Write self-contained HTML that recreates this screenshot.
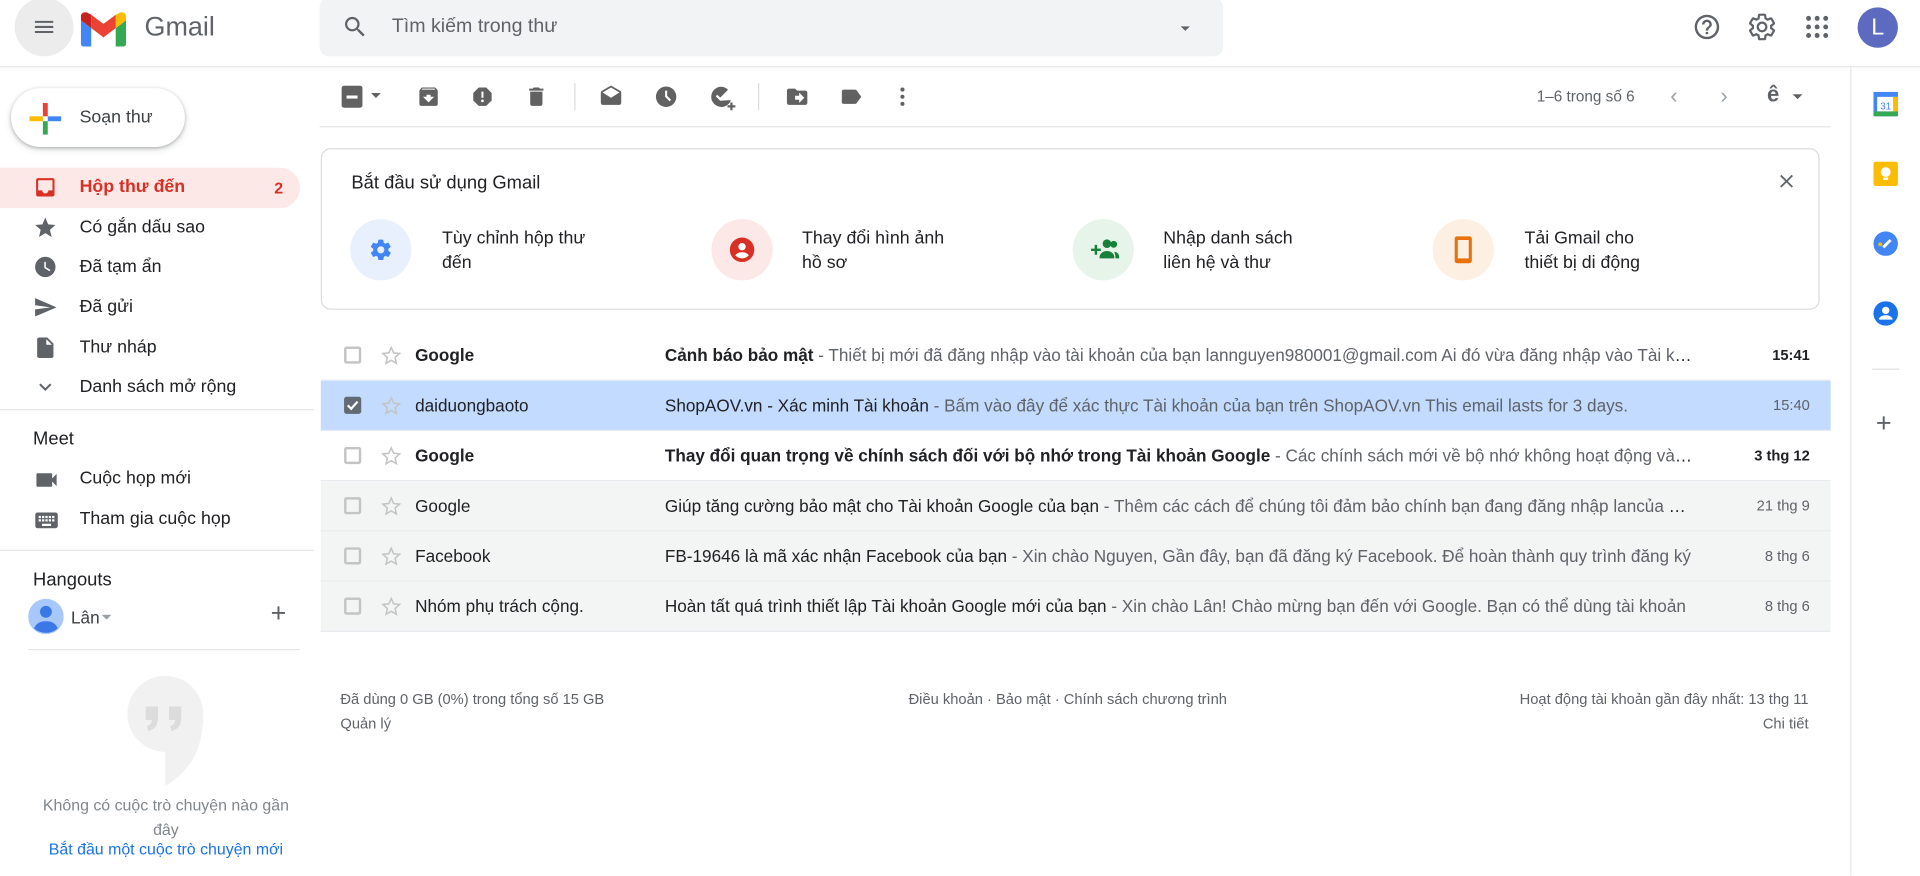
<!DOCTYPE html>
<html><head><meta charset="utf-8">
<style>
*{box-sizing:border-box;margin:0;padding:0}
html,body{width:1920px;height:875px;overflow:hidden;background:#fff}
body{font-family:"Liberation Sans",Arial,sans-serif;color:#202124}
#w{position:absolute;left:0;top:0;width:1568px;height:715px;transform:scale(1.22449);transform-origin:0 0}
.a{position:absolute}
.ico{position:absolute}
.nav{position:absolute;left:0;width:245px;height:33px;font-size:14.5px;line-height:33px}
.nav span{position:absolute;left:65px}
.nav svg{position:absolute;left:27px;top:6px}
.row{position:absolute;left:262px;width:1233px;height:41px;border-bottom:1px solid #e8eaed;font-size:14px;line-height:40px}
.row .cb{position:absolute;left:19px;top:13px;width:14px;height:14px;border:2px solid #c4c4c4;border-radius:2px}
.row .st{position:absolute;left:48px;top:11px}
.row .fr{position:absolute;left:77px}
.row .sub{position:absolute;left:281px;width:840px;white-space:nowrap;overflow:hidden;text-overflow:ellipsis;color:#202124}
.row .sub i{font-style:normal;color:#5f6368}
.row .dt{position:absolute;right:17px;font-size:12px;color:#5f6368}
.b{font-weight:bold}
.g{background:#f3f5f5}
.tb{position:absolute;top:69px}
.card-t{position:absolute;font-size:14.5px;line-height:20px;color:#202124}
.circ{position:absolute;width:50px;height:50px;border-radius:50%;top:179px}
</style></head><body><div id="w">

<div class="a" style="left:12px;top:-2px;width:48px;height:48px;border-radius:50%;background:#ececec"></div>
<svg class="ico" style="left:26px;top:12px" width="20" height="20" viewBox="0 0 24 24"><path d="M3 18h18v-2H3v2zm0-5h18v-2H3v2zm0-7v2h18V6H3z" fill="#5f6368"/></svg>
<svg class="ico" style="left:66px;top:10px" width="37" height="28" viewBox="0 0 37 28">
<path d="M2.5 28h6V13L0 6.5V25.5c0 1.4 1.1 2.5 2.5 2.5z" fill="#4285f4"/>
<path d="M28.5 28h6c1.4 0 2.5-1.1 2.5-2.5V6.5L28.5 13z" fill="#34a853"/>
<path d="M28.5 2v11L37 6.5V3.5C37 .5 33.5-1.2 31.2.6z" fill="#fbbc04"/>
<path d="M8.5 13V2l10 7.5 10-7.5v11l-10 7.5z" fill="#ea4335"/>
<path d="M0 3.5v3L8.5 13V2L5.8.6C3.5-1.2 0 .5 0 3.5z" fill="#c5221f"/>
</svg>
<div class="a" style="left:118px;top:9px;font-size:22px;color:#5f6368">Gmail</div>
<div class="a" style="left:261px;top:-2px;width:738px;height:48px;background:#f1f3f4;border-radius:8px"></div>
<svg class="ico" style="left:279px;top:11px" width="22" height="22" viewBox="0 0 24 24"><path d="M15.5 14h-.79l-.28-.27A6.47 6.47 0 0016 9.5 6.5 6.5 0 109.5 16c1.61 0 3.09-.59 4.23-1.57l.27.28v.79l5 4.99L20.49 19l-4.99-5zm-6 0C7.01 14 5 11.99 5 9.5S7.01 5 9.5 5 14 7.01 14 9.5 11.99 14 9.5 14z" fill="#5f6368"/></svg>
<div class="a" style="left:320px;top:13px;font-size:16px;color:#5f6368">Tìm kiếm trong thư</div>
<svg class="ico" style="left:959px;top:14px" width="18" height="18" viewBox="0 0 24 24"><path d="M7 10l5 5 5-5z" fill="#5f6368"/></svg>
<svg class="ico" style="left:1382px;top:10px" width="24" height="24" viewBox="0 0 24 24"><path d="M11 18h2v-2h-2v2zm1-16C6.48 2 2 6.48 2 12s4.48 10 10 10 10-4.48 10-10S17.52 2 12 2zm0 18c-4.41 0-8-3.59-8-8s3.59-8 8-8 8 3.590 8 8-3.59 8-8 8zm0-14c-2.21 0-4 1.79-4 4h2c0-1.1.9-2 2-2s2 .9 2 2c0 2-3 1.75-3 5h2c0-2.250 3-2.5 3-5 0-2.21-1.79-4-4-4z" fill="#5f6368"/></svg>
<svg class="ico" style="left:1427px;top:10px" width="24" height="24" viewBox="0 0 24 24"><path d="M19.43 12.98c.04-.32.07-.64.07-.98s-.03-.66-.07-.98l2.11-1.65c.19-.15.24-.42.12-.64l-2-3.46c-.12-.22-.39-.3-.61-.22l-2.49 1c-.52-.4-1.08-.73-1.69-.98l-.38-2.65A.49.49 0 0014 2h-4c-.25 0-.46.18-.49.42l-.38 2.65c-.61.25-1.17.59-1.69.98l-2.49-1c-.23-.09-.49 0-.61.22l-2 3.46c-.13.22-.07.49.12.64l2.11 1.65c-.04.32-.07.65-.07.98s.03.66.07.98l-2.11 1.65c-.19.15-.24.42-.12.64l2 3.46c.12.22.39.3.61.22l2.49-1c.52.4 1.08.73 1.69.98l.38 2.65c.03.24.24.42.49.42h4c.25 0 .46-.18.49-.42l.38-2.65c.61-.25 1.17-.59 1.69-.98l2.49 1c.23.09.49 0 .61-.22l2-3.46c.12-.22.07-.49-.12-.64l-2.11-1.65zM12 15.5c-1.93 0-3.5-1.57-3.5-3.5s1.57-3.5 3.5-3.5 3.5 1.57 3.5 3.5-1.57 3.5-3.5 3.5z" fill="none" stroke="#5f6368" stroke-width="1.8"/></svg>
<svg class="ico" style="left:1472px;top:10px" width="24" height="24" viewBox="0 0 24 24" fill="#5f6368"><circle cx="5" cy="5" r="2"/><circle cx="12" cy="5" r="2"/><circle cx="19" cy="5" r="2"/><circle cx="5" cy="12" r="2"/><circle cx="12" cy="12" r="2"/><circle cx="19" cy="12" r="2"/><circle cx="5" cy="19" r="2"/><circle cx="12" cy="19" r="2"/><circle cx="19" cy="19" r="2"/></svg>
<div class="a" style="left:1517px;top:6px;width:33px;height:33px;border-radius:50%;background:#5c6bc0;color:#fff;font-size:19px;line-height:33px;text-align:center">L</div>
<div class="a" style="left:0;top:54px;width:1568px;height:1px;background:#e6e6e6"></div>

<div class="a" style="left:9px;top:72px;width:142px;height:48px;border-radius:24px;background:#fff;box-shadow:0 1px 3px rgba(60,64,67,.35),0 2px 6px rgba(60,64,67,.15)"></div>
<svg class="ico" style="left:24px;top:84px" width="26" height="26" viewBox="0 0 26 26"><rect x="11" y="0" width="4" height="11" fill="#ea4335"/><rect x="15" y="11" width="11" height="4" fill="#4285f4"/><rect x="11" y="15" width="4" height="11" fill="#34a853"/><rect x="0" y="11" width="11" height="4" fill="#fbbc04"/></svg>
<div class="a" style="left:65px;top:88px;font-size:14.5px;color:#3c4043">Soạn thư</div>

<div class="nav" style="top:137px;background:#fce8e6;border-radius:0 17px 17px 0;color:#d93025;font-weight:bold"><svg width="20" height="20" viewBox="0 0 24 24"><path d="M19 3H5a2 2 0 00-2 2v14a2 2 0 002 2h14a2 2 0 002-2V5a2 2 0 00-2-2zm0 12h-4c0 1.66-1.35 3-3 3s-3-1.34-3-3H5V5h14v10z" fill="#d93025"/></svg><span>Hộp thư đến</span><span style="left:224px;font-size:13px">2</span></div>
<div class="nav" style="top:170px"><svg width="20" height="20" viewBox="0 0 24 24"><path d="M12 17.27L18.18 21l-1.64-7.03L22 9.24l-7.19-.61L12 2 9.19 8.63 2 9.24l5.46 4.73L5.82 21z" fill="#5f6368"/></svg><span>Có gắn dấu sao</span></div>
<div class="nav" style="top:202px"><svg width="20" height="20" viewBox="0 0 24 24"><path d="M12 2a10 10 0 100 20 10 10 0 000-20zm4.2 14.2L11 13V7h1.5v5.2l4.5 2.7-.8 1.3z" fill="#5f6368"/></svg><span>Đã tạm ẩn</span></div>
<div class="nav" style="top:235px"><svg width="20" height="20" viewBox="0 0 24 24"><path d="M2.01 21L23 12 2.01 3 2 10l15 2-15 2z" fill="#5f6368"/></svg><span>Đã gửi</span></div>
<div class="nav" style="top:268px"><svg width="20" height="20" viewBox="0 0 24 24"><path d="M6 2a2 2 0 00-2 2v16a2 2 0 002 2h12a2 2 0 002-2V8l-6-6H6zm7 7V3.5L18.5 9H13z" fill="#5f6368"/></svg><span>Thư nháp</span></div>
<div class="nav" style="top:300px"><svg width="20" height="20" viewBox="0 0 24 24"><path d="M7.4 8.6L12 13.2l4.6-4.6L18 10l-6 6-6-6z" fill="#5f6368"/></svg><span>Danh sách mở rộng</span></div>
<div class="a" style="left:0;top:334px;width:256px;height:1px;background:#e6e6e6"></div>
<div class="a" style="left:27px;top:350px;font-size:15px">Meet</div>
<div class="nav" style="top:375px"><svg width="22" height="22" viewBox="0 0 24 24"><path d="M17 10.5V7a1 1 0 00-1-1H4a1 1 0 00-1 1v10a1 1 0 001 1h12a1 1 0 001-1v-3.5l4 4v-11l-4 4z" fill="#5f6368"/></svg><span>Cuộc họp mới</span></div>
<div class="nav" style="top:408px"><svg width="22" height="22" viewBox="0 0 24 24"><path d="M20 5H4c-1.1 0-2 .9-2 2v10c0 1.1.9 2 2 2h16c1.1 0 2-.9 2-2V7c0-1.1-.9-2-2-2zm-9 3h2v2h-2V8zm0 3h2v2h-2v-2zM8 8h2v2H8V8zm0 3h2v2H8v-2zm-1 2H5v-2h2v2zm0-3H5V8h2v2zm9 7H8v-2h8v2zm0-4h-2v-2h2v2zm0-3h-2V8h2v2zm3 3h-2v-2h2v2zm0-3h-2V8h2v2z" fill="#5f6368"/></svg><span>Tham gia cuộc họp</span></div>
<div class="a" style="left:0;top:449px;width:256px;height:1px;background:#e6e6e6"></div>
<div class="a" style="left:27px;top:465px;font-size:15px">Hangouts</div>
<svg class="ico" style="left:23px;top:489px" width="29" height="29" viewBox="0 0 30 30"><circle cx="15" cy="15" r="15" fill="#a8c7fa"/><circle cx="15" cy="11" r="5" fill="#3b78e7"/><path d="M5 25c2-5 6-6 10-6s8 1 10 6a15 15 0 01-20 0z" fill="#3b78e7"/></svg>
<div class="a" style="left:58px;top:496px;font-size:14px;color:#3c4043">Lân</div>
<svg class="ico" style="left:82px;top:499px" width="10" height="10" viewBox="0 0 10 10"><path d="M1 3l4 4 4-4z" fill="#9aa0a6"/></svg>
<div class="a" style="left:221px;top:488px;font-size:22px;color:#5f6368">+</div>
<div class="a" style="left:23px;top:530px;width:222px;height:1px;background:#e6e6e6"></div>
<svg class="ico" style="left:104px;top:552px" width="62" height="92" viewBox="0 0 62 92"><path d="M31 0a31 31 0 00-31 31c0 17 14 31 31 31v28c16-10 31-25 31-59A31 31 0 0031 0z" fill="#f1f1f1"/><path d="M15 25h10v10c0 5-3 9-8 10l-1-4c3-1 4-3 4-5h-5zM34 25h10v10c0 5-3 9-8 10l-1-4c3-1 4-3 4-5h-5z" fill="#dcdcdc"/></svg>
<div class="a" style="left:23px;top:648px;width:225px;text-align:center;font-size:13px;line-height:20px;color:#80868b">Không có cuộc trò chuyện nào gần đây</div>
<div class="a" style="left:23px;top:686px;width:225px;text-align:center;font-size:13px;color:#1a73e8">Bắt đầu một cuộc trò chuyện mới</div>

<svg class="tb" style="left:278px" width="20" height="20" viewBox="0 0 20 20"><rect x="1" y="1" width="17" height="18" rx="2" fill="#616161"/><rect x="5" y="9" width="9" height="2.5" fill="#fff"/></svg>
<svg class="tb" style="left:302px;top:74px" width="10" height="10" viewBox="0 0 10 10"><path d="M1 2l4 4 4-4z" fill="#616161"/></svg>
<svg class="tb" style="left:340px" width="20" height="20" viewBox="0 0 24 24"><path d="M20.5 5.2L19.1 3.5A1.5 1.5 0 0018 3H6c-.5 0-.9.2-1.2.5L3.5 5.2C3.2 5.6 3 6 3 6.5V19a2 2 0 002 2h14a2 2 0 002-2V6.5c0-.5-.2-.9-.5-1.3zM12 17.5L6.5 12H10v-2h4v2h3.5L12 17.5zM5.1 5l.8-1h12l.9 1H5.1z" fill="#616161"/></svg>
<svg class="tb" style="left:384px" width="20" height="20" viewBox="0 0 24 24"><path d="M15.7 3H8.3L3 8.3v7.4L8.3 21h7.4l5.3-5.3V8.3L15.7 3zM12 17.3a1.3 1.3 0 110-2.6 1.3 1.3 0 010 2.6zm1-4.3h-2V7h2v6z" fill="#616161"/></svg>
<svg class="tb" style="left:428px" width="20" height="20" viewBox="0 0 24 24"><path d="M6 19c0 1.1.9 2 2 2h8c1.1 0 2-.9 2-2V7H6v12zM19 4h-3.5l-1-1h-5l-1 1H5v2h14V4z" fill="#616161"/></svg>
<div class="a" style="left:469px;top:68px;width:1px;height:22px;background:#dadce0"></div>
<svg class="tb" style="left:489px" width="20" height="20" viewBox="0 0 24 24"><path d="M21.99 8c0-.72-.37-1.35-.94-1.7L12 1 2.95 6.3C2.38 6.65 2 7.28 2 8v10c0 1.1.9 2 2 2h16c1.1 0 2-.9 2-2l-.01-10zM12 13L3.740 7.84 12 3l8.26 4.84L12 13z" fill="#616161"/></svg>
<svg class="tb" style="left:534px" width="20" height="20" viewBox="0 0 24 24"><path d="M12 2a10 10 0 100 20 10 10 0 000-20zm3.5 14.5L11 12V6h2v5.2l3.8 3.8-1.3 1.5z" fill="#616161"/></svg>
<svg class="tb" style="left:579px" width="22" height="22" viewBox="0 0 24 24"><path d="M11 2a9 9 0 108.5 12H17a7 7 0 01-.1 0L10 14.5 6 10.5l1.4-1.4L10 11.7l7-7A9 9 0 0011 2z" fill="#616161"/><path d="M19 16h2v2.5h2.5v2H21V23h-2v-2.5h-2.5v-2H19z" fill="#616161"/></svg>
<div class="a" style="left:619px;top:68px;width:1px;height:22px;background:#dadce0"></div>
<svg class="tb" style="left:641px" width="20" height="20" viewBox="0 0 24 24"><path d="M20 6h-8l-2-2H4c-1.1 0-2 .9-2 2v12c0 1.1.9 2 2 2h16c1.1 0 2-.9 2-2V8c0-1.1-.9-2-2-2zm-6 12v-3h-4v-4h4V8l5 5-5 5z" fill="#616161"/></svg>
<svg class="tb" style="left:685px" width="20" height="20" viewBox="0 0 24 24"><path d="M17.6 5.8A2 2 0 0016 5H5a2 2 0 00-2 2v10a2 2 0 002 2h11c.7 0 1.3-.3 1.6-.8L22 12l-4.4-6.2z" fill="#616161"/></svg>
<svg class="tb" style="left:727px" width="20" height="20" viewBox="0 0 24 24"><circle cx="12" cy="5" r="2" fill="#616161"/><circle cx="12" cy="12" r="2" fill="#616161"/><circle cx="12" cy="19" r="2" fill="#616161"/></svg>
<div class="a" style="left:1255px;top:72px;font-size:12.5px;color:#5f6368">1–6 trong số 6</div>
<div class="a" style="left:1364px;top:68px;font-size:18px;color:#9aa0a6">‹</div>
<div class="a" style="left:1405px;top:68px;font-size:18px;color:#9aa0a6">›</div>
<div class="a" style="left:1443px;top:67px;font-size:18px;color:#5f6368;font-weight:bold">ê</div>
<svg class="ico" style="left:1463px;top:75px" width="10" height="10" viewBox="0 0 10 10"><path d="M1 2l4 4 4-4z" fill="#616161"/></svg>
<div class="a" style="left:261px;top:103px;width:1234px;height:1px;background:#e6e6e6"></div>

<div class="a" style="left:262px;top:121px;width:1224px;height:132px;border:1px solid #dadce0;border-radius:8px"></div>
<div class="a" style="left:287px;top:141px;font-size:15px;color:#202124">Bắt đầu sử dụng Gmail</div>
<svg class="ico" style="left:1450px;top:139px" width="18" height="18" viewBox="0 0 24 24"><path d="M19 6.4L17.6 5 12 10.6 6.4 5 5 6.4 10.6 12 5 17.6 6.4 19 12 13.4 17.6 19 19 17.6 13.4 12z" fill="#5f6368"/></svg>
<div class="circ" style="left:286px;background:#e8f0fe"></div>
<svg class="ico" style="left:301px;top:194px" width="20" height="20" viewBox="0 0 24 24"><path d="M19.4 13c.04-.3.06-.66.06-1s-.02-.7-.06-1l2.1-1.65c.2-.15.24-.42.12-.64l-2-3.46c-.12-.22-.39-.3-.61-.22l-2.5 1a7.3 7.3 0 00-1.7-.98l-.38-2.65A.49.49 0 0014 2h-4c-.25 0-.46.18-.49.42l-.38 2.65c-.6.25-1.17.59-1.7.98l-2.48-1c-.23-.08-.5 0-.61.22l-2 3.46c-.13.22-.07.5.12.64L4.57 11c-.04.3-.07.66-.07 1s.03.7.07 1l-2.1 1.65c-.2.15-.25.42-.13.64l2 3.46c.12.22.39.3.61.22l2.49-1c.52.4 1.08.73 1.7.98l.37 2.650c.04.24.25.42.5.42h4c.25 0 .46-.18.49-.42l.38-2.65c.6-.25 1.17-.59 1.69-.98l2.49 1c.23.08.5 0 .61-.22l2-3.46c.12-.22.07-.5-.12-.64L19.4 13zM12 15.5a3.5 3.5 0 110-7 3.5 3.5 0 010 7z" fill="#4285f4"/></svg>
<div class="card-t" style="left:361px;top:185px">Tùy chỉnh hộp thư<br>đến</div>
<div class="circ" style="left:581px;background:#fce8e6"></div>
<svg class="ico" style="left:594px;top:192px" width="24" height="24" viewBox="0 0 24 24"><circle cx="12" cy="12" r="10" fill="#d93025"/><circle cx="12" cy="9.5" r="3" fill="#fff"/><path d="M6.5 16.5c1.5-2 3.5-2.5 5.5-2.5s4 .5 5.5 2.5c-1.3 1.6-3.3 2.5-5.5 2.5s-4.2-.9-5.5-2.5z" fill="#fff"/></svg>
<div class="card-t" style="left:655px;top:185px">Thay đổi hình ảnh<br>hồ sơ</div>
<div class="circ" style="left:876px;background:#e6f4ea"></div>
<svg class="ico" style="left:889px;top:193px" width="26" height="22" viewBox="0 0 26 22"><path d="M2 10h3V7h2v3h3v2H7v3H5v-3H2z" fill="#188038"/><circle cx="15" cy="6" r="3.5" fill="#188038"/><circle cx="20.5" cy="6.5" r="2.8" fill="#188038"/><path d="M9 17c0-3 3-5 6-5s6 2 6 5v1H9z" fill="#188038"/><path d="M21 12.5c2.5.5 4 2 4 4.5v1h-3c0-2-.5-4-1-5.5z" fill="#188038"/></svg>
<div class="card-t" style="left:950px;top:185px">Nhập danh sách<br>liên hệ và thư</div>
<div class="circ" style="left:1170px;background:#feefe3"></div>
<svg class="ico" style="left:1187px;top:192px" width="16" height="24" viewBox="0 0 16 24"><rect x="1" y="1" width="14" height="22" rx="2" fill="#e8710a"/><rect x="3.5" y="4" width="9" height="15" fill="#feefe3"/></svg>
<div class="card-t" style="left:1245px;top:185px">Tải Gmail cho<br>thiết bị di động</div>

<svg width="0" height="0" style="position:absolute"><defs><symbol id="star" viewBox="0 0 24 24"><path d="M12 3.5l2.5 5.6 6.1.6-4.6 4.1 1.3 6-5.3-3.1-5.3 3.1 1.3-6L3.4 9.7l6.1-.6z" fill="none" stroke="#c4c4c4" stroke-width="1.6"/></symbol></defs></svg>
<div class="row" style="top:270px"><div class="cb"></div><svg class="st" width="19" height="19"><use href="#star"/></svg><div class="fr b">Google</div><div class="sub"><b>Cảnh báo bảo mật</b><i> - Thiết bị mới đã đăng nhập vào tài khoản của bạn lannguyen980001@gmail.com Ai đó vừa đăng nhập vào Tài khoản Google của bạn</i></div><div class="dt b" style="color:#202124">15:41</div></div>
<div class="row" style="top:311px;background:#c2dbff"><div class="cb" style="background:#616a75;border-color:#616a75"><svg style="position:absolute;left:-1px;top:-1px" width="12" height="12" viewBox="0 0 12 12"><path d="M2 6l2.8 2.8L10 3" stroke="#fff" stroke-width="1.8" fill="none"/></svg></div><svg class="st" width="19" height="19"><use href="#star"/></svg><div class="fr">daiduongbaoto</div><div class="sub">ShopAOV.vn - Xác minh Tài khoản<i> - Bấm vào đây để xác thực Tài khoản của bạn trên ShopAOV.vn This email lasts for 3 days.</i></div><div class="dt">15:40</div></div>
<div class="row" style="top:352px"><div class="cb"></div><svg class="st" width="19" height="19"><use href="#star"/></svg><div class="fr b">Google</div><div class="sub"><b>Thay đổi quan trọng về chính sách đối với bộ nhớ trong Tài khoản Google</b><i> - Các chính sách mới về bộ nhớ không hoạt động và vượt quá hạn mức</i></div><div class="dt b" style="color:#202124">3 thg 12</div></div>
<div class="row g" style="top:393px"><div class="cb"></div><svg class="st" width="19" height="19"><use href="#star"/></svg><div class="fr">Google</div><div class="sub">Giúp tăng cường bảo mật cho Tài khoản Google của bạn<i> - Thêm các cách để chúng tôi đảm bảo chính bạn đang đăng nhập lancủa bạn</i></div><div class="dt">21 thg 9</div></div>
<div class="row g" style="top:434px"><div class="cb"></div><svg class="st" width="19" height="19"><use href="#star"/></svg><div class="fr">Facebook</div><div class="sub">FB-19646 là mã xác nhận Facebook của bạn<i> - Xin chào Nguyen, Gần đây, bạn đã đăng ký Facebook. Để hoàn thành quy trình đăng ký</i></div><div class="dt">8 thg 6</div></div>
<div class="row g" style="top:475px"><div class="cb"></div><svg class="st" width="19" height="19"><use href="#star"/></svg><div class="fr">Nhóm phụ trách cộng.</div><div class="sub">Hoàn tất quá trình thiết lập Tài khoản Google mới của bạn<i> - Xin chào Lân! Chào mừng bạn đến với Google. Bạn có thể dùng tài khoản</i></div><div class="dt">8 thg 6</div></div>

<div class="a" style="left:278px;top:561px;font-size:12px;color:#5f6368;line-height:20px">Đã dùng 0 GB (0%) trong tổng số 15 GB<br>Quản lý</div>
<div class="a" style="left:742px;top:561px;font-size:12px;color:#5f6368;line-height:20px">Điều khoản · Bảo mật · Chính sách chương trình</div>
<div class="a" style="right:91px;top:561px;font-size:12px;color:#5f6368;line-height:20px;text-align:right">Hoạt động tài khoản gần đây nhất: 13 thg 11<br>Chi tiết</div>

<div class="a" style="left:1511px;top:55px;width:1px;height:660px;background:#e6e6e6"></div>
<svg class="ico" style="left:1530px;top:75px" width="20" height="20" viewBox="0 0 20 20"><rect x="0" y="0" width="20" height="20" rx="2" fill="#4285f4"/><rect x="3" y="4" width="14" height="12" fill="#fff"/><rect x="0" y="16" width="20" height="4" fill="#34a853"/><rect x="16" y="0" width="4" height="16" fill="#fbbc04"/><rect x="0" y="0" width="20" height="4" fill="#4285f4"/><text x="10" y="14.5" font-size="8" text-anchor="middle" fill="#4285f4" font-family="Liberation Sans">31</text></svg>
<svg class="ico" style="left:1530px;top:132px" width="20" height="20" viewBox="0 0 20 20"><rect width="20" height="20" rx="2" fill="#fbbc04"/><circle cx="10" cy="8.5" r="4" fill="#fff"/><rect x="8" y="13" width="4" height="2" fill="#fff"/></svg>
<svg class="ico" style="left:1530px;top:189px" width="20" height="20" viewBox="0 0 20 20"><circle cx="10" cy="10" r="10" fill="#4285f4"/><path d="M8 13l6-6" stroke="#fff" stroke-width="2.4"/><circle cx="5.5" cy="10.5" r="1.6" fill="#fbbc04"/></svg>
<svg class="ico" style="left:1530px;top:246px" width="20" height="20" viewBox="0 0 20 20"><circle cx="10" cy="10" r="10" fill="#1a73e8"/><circle cx="10" cy="7.5" r="3" fill="#fff"/><path d="M4.5 14c1.5-2 3.5-2.5 5.5-2.5s4 .5 5.5 2.5v1h-11z" fill="#fff"/></svg>
<div class="a" style="left:1529px;top:301px;width:22px;height:1px;background:#e0e0e0"></div>
<div class="a" style="left:1532px;top:333px;font-size:22px;color:#5f6368">+</div>

</div></body></html>
